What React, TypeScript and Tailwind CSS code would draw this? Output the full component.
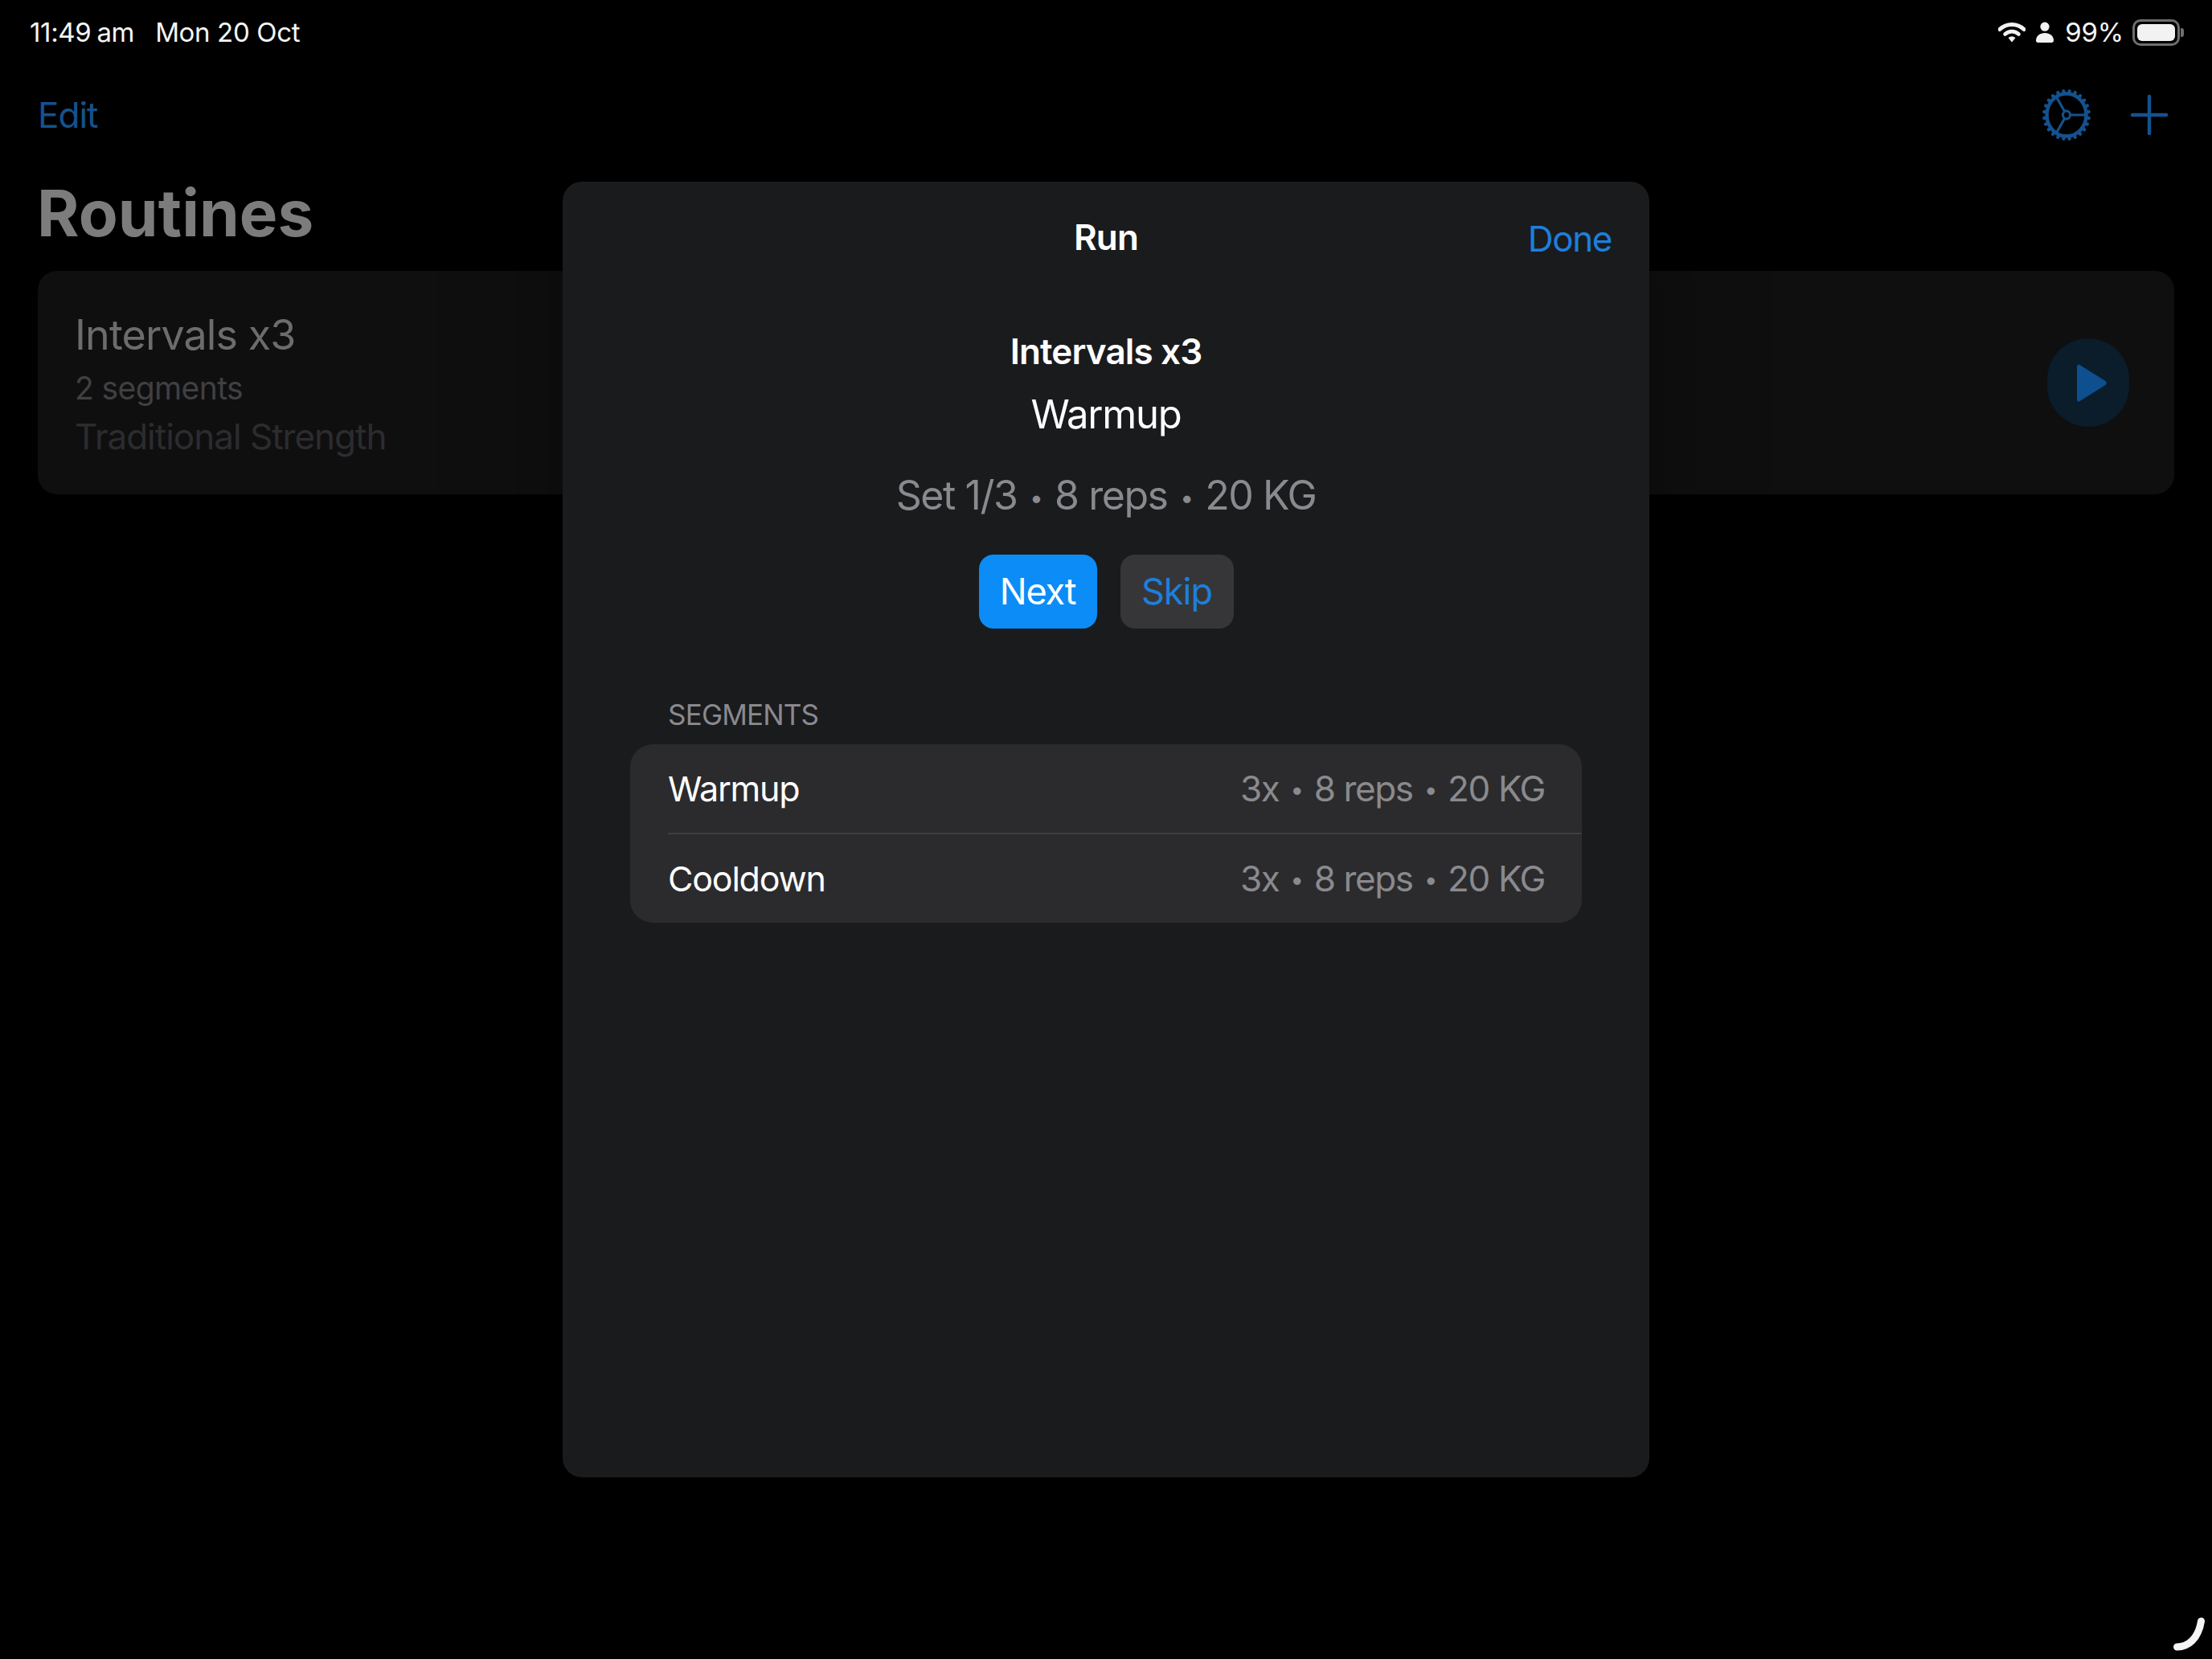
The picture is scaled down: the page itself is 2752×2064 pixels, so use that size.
import React from 'react';

const SF = "font-['Inter','Liberation_Sans',sans-serif]";

const WifiIcon = () => (
  <svg viewBox="0 0 34 26" className="w-[34px] h-[26px]" fill="none">
    <path d="M2 9.5C10.5 1.5 23.5 1.5 32 9.5" stroke="#f2f2f2" strokeWidth="5" strokeLinecap="round" />
    <path d="M8.5 15.5C13.5 11 20.5 11 25.5 15.5" stroke="#f2f2f2" strokeWidth="4.6" strokeLinecap="round" />
    <path d="M12.5 20L17 25.5L21.5 20C18.5 17.8 15.5 17.8 12.5 20Z" fill="#f2f2f2" />
  </svg>
);

const PersonIcon = () => (
  <svg viewBox="0 0 22 26" className="w-[22px] h-[26px]" fill="#f2f2f2">
    <circle cx="11" cy="6.2" r="5.6" />
    <path d="M0 23.5C0 17.5 5 14 11 14C17 14 22 17.5 22 23.5C22 25 21 26 19.5 26H2.5C1 26 0 25 0 23.5Z" />
  </svg>
);

const BatteryIcon = () => (
  <div className="flex items-center">
    <div className="w-[59px] h-[33px] rounded-[10px] border-[3px] border-[#6e6e6e] p-[3px]">
      <div className="w-full h-full rounded-[6px] bg-[#f2f2f2]" />
    </div>
    <div className="w-[4px] h-[11px] rounded-r-[3px] bg-[#6e6e6e] ml-[1px]" />
  </div>
);

const GearIcon = () => (
  <svg viewBox="0 0 60 64" className="w-[60px] h-[64px]" fill="none" stroke="#14528f">
    <g transform="translate(30 32)">
      <ellipse cx="0" cy="0" rx="24.5" ry="26.5" strokeWidth="4.4" />
      {Array.from({ length: 24 }).map((_, i) => {
        const a = ((i + 0.5) * Math.PI) / 12;
        return (
          <line
            key={i}
            x1={Math.cos(a) * 26}
            y1={Math.sin(a) * 28}
            x2={Math.cos(a) * 28}
            y2={Math.sin(a) * 30}
            strokeWidth="4.2"
            strokeLinecap="round"
          />
        );
      })}
      <ellipse cx="0" cy="0" rx="4.5" ry="5" strokeWidth="3" />
      <path d="M4.5 0H25M-2.3 4.3L-13 23M-2.3 -4.3L-13 -23" strokeWidth="3.2" />
    </g>
  </svg>
);

const PlusIcon = () => (
  <svg viewBox="0 0 46 50" className="w-[46px] h-[50px]" fill="none" stroke="#14528f" strokeWidth="4.4" strokeLinecap="round">
    <path d="M23 2V48M2 25H44" />
  </svg>
);

const PlayButton = () => (
  <div className="w-[102px] h-[110px] rounded-full bg-[#0b1c2a] flex items-center justify-center">
    <svg viewBox="0 0 37 47" className="w-[37px] h-[47px] ml-[8px]" fill="#0d4f8f">
      <path d="M0 3C0 0.5 2.5 -0.5 4.3 1.4L35.5 21C37.3 22.4 37.3 24.6 35.5 26L4.3 45.6C2.5 47.5 0 46.5 0 44Z" />
    </svg>
  </div>
);

// SF's bullet is a lot smaller than Inter's
const Dot = () => <span className="text-[30px] align-[4px] px-[3px]">•</span>;

const SegmentRow = ({ name }: { name: string }) => (
  <div className="flex items-center justify-between h-[110px] pl-[47px] pr-[46px]">
    <span className="text-[43px] leading-none tracking-[-1.2px] text-white">{name}</span>
    <span className="text-[44px] leading-none tracking-[-1.4px] text-[#8a8a8e]">
      3x <Dot /> 8 reps <Dot /> 20 KG
    </span>
  </div>
);

export default function App() {
  return (
    <div className={`relative w-full h-screen overflow-hidden bg-black ${SF}`}>
      {/* status bar */}
      <div className="flex items-center justify-between h-[80px] pl-[37px] pr-[35px]">
        <div className="flex items-center text-[33px] leading-none tracking-[-0.35px] text-[#f5f5f5]">
          <span>11:49</span>
          <span className="ml-[7px]">am</span>
          <span className="ml-[26px]">Mon 20 Oct</span>
        </div>
        <div className="flex items-center">
          <WifiIcon />
          <div className="ml-[13px]"><PersonIcon /></div>
          <span className="ml-[14px] text-[33px] leading-none tracking-[-0.2px] text-[#f5f5f5]">99%</span>
          <div className="ml-[11px]"><BatteryIcon /></div>
        </div>
      </div>

      {/* nav bar */}
      <div className="flex items-center justify-between h-[70px] mt-[28px] pl-[47px] pr-[55px]">
        <span className="text-[44px] leading-none tracking-[-1px] text-[#14528f]">Edit</span>
        <div className="flex items-center gap-[50px]">
          <GearIcon />
          <PlusIcon />
        </div>
      </div>

      <h1 className="mt-[42px] pl-[46px] h-[90px] flex items-center text-[80px] leading-none font-bold tracking-[0.1px] text-[#7c7c7c]">
        Routines
      </h1>

      {/* routine card */}
      <div className="mx-[47px] mt-[27px] h-[278px] rounded-[24px] bg-[#0f0f10] flex items-center justify-between pl-[46px] pr-[56px]">
        <div className="flex flex-col mt-[4px]">
          <span className="text-[52px] leading-[64px] tracking-[-0.9px] text-[#6c6c6c]">Intervals x3</span>
          <span className="mt-[6px] text-[39px] leading-[56px] tracking-[-0.6px] text-[#404042]">2 segments</span>
          <span className="mt-[3px] text-[44px] leading-[58px] tracking-[-1px] text-[#2c2c2e]">Traditional Strength</span>
        </div>
        <PlayButton />
      </div>

      {/* run sheet */}
      <div className="absolute left-[700px] top-[226px] w-[1352px] h-[1612px] rounded-[24px] bg-[#1a1b1d] shadow-[0_0_140px_rgba(0,0,0,0.35)]">
        <div className="relative flex items-center justify-center h-[138px]">
          <span className="text-[44px] leading-none font-semibold tracking-[-0.8px] text-white">Run</span>
          <span className="absolute right-[47px] top-[49px] text-[44px] leading-none tracking-[-1.4px] text-[#1d7fdc]">Done</span>
        </div>

        <div className="flex flex-col items-center mt-[43px]">
          <span className="text-[44px] leading-[60px] font-semibold tracking-[-0.85px] text-white">Intervals x3</span>
          <span className="mt-[19px] text-[49px] leading-[60px] tracking-[-1.2px] text-white">Warmup</span>
          <span className="mt-[40px] text-[50px] leading-[60px] tracking-[-1.45px] text-[#8a8a8e]">
            Set 1/3 <Dot /> 8 reps <Dot /> 20 KG
          </span>
          <div className="flex gap-[29px] mt-[41px]">
            <button className="w-[147px] h-[92px] rounded-[18px] bg-[#0c8cf6] text-[45px] tracking-[-1.2px] text-white">Next</button>
            <button className="w-[141px] h-[92px] rounded-[18px] bg-[#363639] text-[45px] tracking-[-1px] text-[#1d7fdc]">Skip</button>
          </div>
        </div>

        <div className="mt-[86px] mx-[84px]">
          <div className="pl-[47px] text-[35px] leading-[42px] tracking-[-0.8px] text-[#8a8a8e]">SEGMENTS</div>
          <div className="mt-[16px] rounded-[28px] bg-[#2b2b2d]">
            <SegmentRow name="Warmup" />
            <div className="ml-[47px] h-[2px] bg-[#3f3f41]" />
            <SegmentRow name="Cooldown" />
          </div>
        </div>
      </div>

      {/* pencil / resize handle in the corner */}
      <svg viewBox="0 0 40 42" className="absolute right-[8px] bottom-[10px] w-[40px] h-[42px]" fill="none">
        <path d="M4.5 37C18 37 31 27 34.5 5" stroke="#f5f5f5" strokeWidth="9" strokeLinecap="round" />
      </svg>
    </div>
  );
}
